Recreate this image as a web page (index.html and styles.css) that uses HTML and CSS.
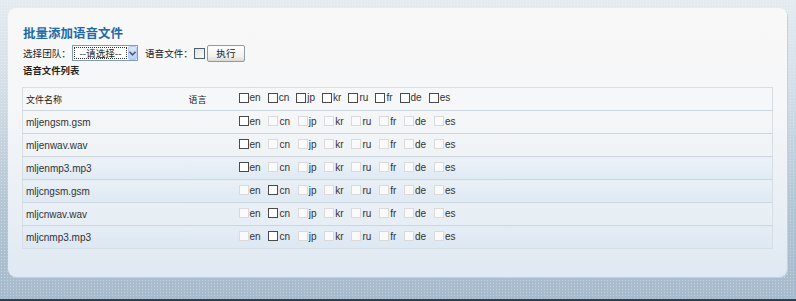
FILE: index.html
```html
<!DOCTYPE html>
<html lang="zh-CN">
	<head>
		<meta charset="UTF-8" />
		<meta name="viewport" content="width=device-width, initial-scale=1.0" />
		<title>批量添加语音文件</title>
		<link rel="stylesheet" href="styles.css">
	</head>
	<body>
		<div class="page">
			<div class="panel">
				<h1 class="title">批量添加语音文件</h1>
				<div class="toolbar">
					<span class="label">选择团队：</span>
					<span class="select">
						<span class="select-text"><span class="focus">--请选择--</span></span>
						<span class="select-btn">
							<svg width="7" height="5" viewBox="0 0 7 5"><path d="M0.5 0.8 L3.5 3.8 L6.5 0.8" fill="none" stroke="#4d6185" stroke-width="1.6"/></svg>
						</span>
					</span>
					<span class="label label-file">语音文件：</span>
					<span class="xp-box"></span>
					<button class="btn">执行</button>
				</div>
				<h2 class="subtitle">语音文件列表</h2>
				<table class="files">
					<thead>
						<tr>
							<td class="col-name">文件名称</td>
							<td class="col-lang">语言</td>
							<td>
								<span class="opt"><i class="cb"></i>en</span>
								<span class="opt"><i class="cb"></i>cn</span>
								<span class="opt"><i class="cb"></i>jp</span>
								<span class="opt"><i class="cb"></i>kr</span>
								<span class="opt"><i class="cb"></i>ru</span>
								<span class="opt"><i class="cb"></i>fr</span>
								<span class="opt"><i class="cb"></i>de</span>
								<span class="opt"><i class="cb"></i>es</span>
							</td>
						</tr>
					</thead>
					<tbody>
						<tr>
							<td class="col-name en">mljengsm.gsm</td>
							<td></td>
							<td>
								<span class="opt"><i class="cb"></i>en</span>
								<span class="opt"><i class="cb off"></i>cn</span>
								<span class="opt"><i class="cb off"></i>jp</span>
								<span class="opt"><i class="cb off"></i>kr</span>
								<span class="opt"><i class="cb off"></i>ru</span>
								<span class="opt"><i class="cb off"></i>fr</span>
								<span class="opt"><i class="cb off"></i>de</span>
								<span class="opt"><i class="cb off"></i>es</span>
							</td>
						</tr>
						<tr>
							<td class="col-name en">mljenwav.wav</td>
							<td></td>
							<td>
								<span class="opt"><i class="cb"></i>en</span>
								<span class="opt"><i class="cb off"></i>cn</span>
								<span class="opt"><i class="cb off"></i>jp</span>
								<span class="opt"><i class="cb off"></i>kr</span>
								<span class="opt"><i class="cb off"></i>ru</span>
								<span class="opt"><i class="cb off"></i>fr</span>
								<span class="opt"><i class="cb off"></i>de</span>
								<span class="opt"><i class="cb off"></i>es</span>
							</td>
						</tr>
						<tr class="tint">
							<td class="col-name en">mljenmp3.mp3</td>
							<td></td>
							<td>
								<span class="opt"><i class="cb"></i>en</span>
								<span class="opt"><i class="cb off"></i>cn</span>
								<span class="opt"><i class="cb off"></i>jp</span>
								<span class="opt"><i class="cb off"></i>kr</span>
								<span class="opt"><i class="cb off"></i>ru</span>
								<span class="opt"><i class="cb off"></i>fr</span>
								<span class="opt"><i class="cb off"></i>de</span>
								<span class="opt"><i class="cb off"></i>es</span>
							</td>
						</tr>
						<tr class="tint">
							<td class="col-name en">mljcngsm.gsm</td>
							<td></td>
							<td>
								<span class="opt"><i class="cb off"></i>en</span>
								<span class="opt"><i class="cb"></i>cn</span>
								<span class="opt"><i class="cb off"></i>jp</span>
								<span class="opt"><i class="cb off"></i>kr</span>
								<span class="opt"><i class="cb off"></i>ru</span>
								<span class="opt"><i class="cb off"></i>fr</span>
								<span class="opt"><i class="cb off"></i>de</span>
								<span class="opt"><i class="cb off"></i>es</span>
							</td>
						</tr>
						<tr>
							<td class="col-name en">mljcnwav.wav</td>
							<td></td>
							<td>
								<span class="opt"><i class="cb off"></i>en</span>
								<span class="opt"><i class="cb"></i>cn</span>
								<span class="opt"><i class="cb off"></i>jp</span>
								<span class="opt"><i class="cb off"></i>kr</span>
								<span class="opt"><i class="cb off"></i>ru</span>
								<span class="opt"><i class="cb off"></i>fr</span>
								<span class="opt"><i class="cb off"></i>de</span>
								<span class="opt"><i class="cb off"></i>es</span>
							</td>
						</tr>
						<tr class="tint">
							<td class="col-name en">mljcnmp3.mp3</td>
							<td></td>
							<td>
								<span class="opt"><i class="cb off"></i>en</span>
								<span class="opt"><i class="cb"></i>cn</span>
								<span class="opt"><i class="cb off"></i>jp</span>
								<span class="opt"><i class="cb off"></i>kr</span>
								<span class="opt"><i class="cb off"></i>ru</span>
								<span class="opt"><i class="cb off"></i>fr</span>
								<span class="opt"><i class="cb off"></i>de</span>
								<span class="opt"><i class="cb off"></i>es</span>
							</td>
						</tr>
					</tbody>
				</table>
			</div>
		</div>
	</body>
</html>
```

FILE: styles.css
```css
* {
	box-sizing: border-box;
}
body {
	margin: 0;
	font-family: "Liberation Sans", "Noto Sans CJK SC", sans-serif;
	font-size: 10px;
	color: #222;
}

.page {
	height: 301px;
	padding: 8px 9px 0 8px;
	border-bottom: 2px solid #2f3f4c;
	background-color: #a9bdcc;
	background-image:
		radial-gradient(rgba(255, 255, 255, 0.35) 0.6px, transparent 0.9px),
		linear-gradient(#e4ebf1 0, #d3dee7 30%, #b2c5d3 70%, #a5bacb 100%);
	background-size: 3px 3px, 100% 100%;
}

.panel {
	height: 269px;
	padding: 16px 0 0 14px;
	border-radius: 8px;
	background: linear-gradient(#f8f8f8 0, #f6f7f8 35%, #eef2f6 60%, #dfe9f3 100%);
	box-shadow: 1px 1px 0 #c4d2dd;
}

.title {
	margin: 0;
	padding-left: 1px;
	height: 18px;
	line-height: 18px;
	font-size: 12.5px;
	font-weight: bold;
	color: #1f6aa6;
	font-family: "Noto Sans CJK SC", sans-serif;
}

.toolbar {
	display: flex;
	align-items: center;
	height: 18px;
	margin-top: 2px;
	padding-left: 1px;
}

.label {
	font-family: "Noto Sans CJK SC", sans-serif;
	font-size: 9.6px;
	color: #222;
}
.label-file {
	margin-left: 7px;
}

.select {
	display: flex;
	margin-left: 1px;
	height: 16px;
	border: 1px solid #7f9db9;
	background: #fff;
}
.select-text {
	width: 55px;
	padding: 1px;
}
.focus {
	display: block;
	height: 12px;
	line-height: 11px;
	border: 1px dotted #333;
	font-size: 9.6px;
	font-family: "Noto Sans CJK SC", sans-serif;
	text-align: center;
}
.select-btn {
	display: flex;
	align-items: center;
	justify-content: center;
	width: 9px;
	margin: 0;
	border: 1px solid #b9cbf0;
	border-radius: 2px;
	background: linear-gradient(#dde7fb, #bccff6);
}

.xp-box {
	width: 11px;
	height: 11px;
	margin-left: 1px;
	border: 1px solid #4c5f72;
	background: linear-gradient(135deg, #e2e2dd, #fbfbf9);
}

.btn {
	width: 38px;
	height: 17px;
	margin-left: 2px;
	padding: 0;
	border: 1px solid #8e99a4;
	border-radius: 2px;
	background: linear-gradient(#fefefe, #f1f0ec 70%, #dcdad2);
	font-family: "Noto Sans CJK SC", sans-serif;
	font-size: 9.6px;
	color: #222;
}

.subtitle {
	margin: 1px 0 0 0;
	padding-left: 1px;
	height: 14px;
	line-height: 14px;
	font-size: 9.4px;
	font-weight: bold;
	font-family: "Noto Sans CJK SC", sans-serif;
}

.files {
	margin-top: 10px;
	width: 751px;
	border-collapse: collapse;
	border: 1px solid #d7dee4;
}
.files td {
	height: 23px;
	padding: 0;
	border-top: 1px solid #cdd7e0;
	vertical-align: middle;
	white-space: nowrap;
}
.files thead td {
	border-top: none;
	font-family: "Noto Sans CJK SC", sans-serif;
	font-size: 9px;
}
.files tr.tint td {
	background: linear-gradient(rgba(225, 236, 246, 0.2), rgba(214, 229, 243, 0.55));
}
.col-name {
	width: 166px;
	padding-left: 3px !important;
}
.col-lang {
	width: 50px;
}
.files td.en {
	font-family: "Liberation Sans", sans-serif;
	font-size: 10px;
	color: #333;
}

.opt {
	display: inline-flex;
	align-items: center;
	margin-right: 5px;
	font-family: "Liberation Sans", sans-serif;
	font-size: 10px;
	color: #333;
}
.cb {
	width: 10px;
	height: 10px;
	margin-right: 1px;
	border: 1px solid #4a4a4a;
	background: #fff;
}
.cb.off {
	border-color: #dadada;
	background: #fafafa;
}
```
